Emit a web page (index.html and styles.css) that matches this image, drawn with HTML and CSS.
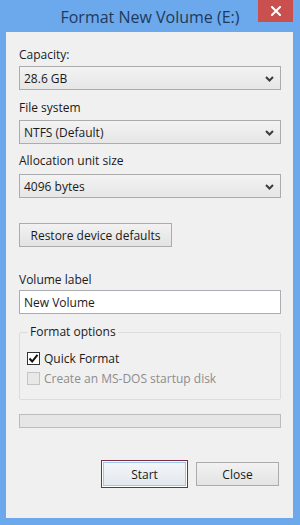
FILE: index.html
```html
<!DOCTYPE html>
<html>
<head>
<meta charset="utf-8">
<link rel="stylesheet" href="styles.css">
</head>
<body>
<div class="window">
  <div class="titlebar">
    <div class="title">Format New Volume (E:)</div>
    <div class="close-btn">
      <svg width="10" height="10" viewBox="0 0 10 10"><path d="M1 1L9 9M9 1L1 9" stroke="#fff" stroke-width="2" stroke-linecap="square"/></svg>
    </div>
  </div>
  <div class="client">
    <div class="label l1">Capacity:</div>
    <div class="combo c1"><span>28.6 GB</span><svg class="chev" width="9" height="6" viewBox="0 0 9 6"><path d="M1 1L4.5 4.5L8 1" fill="none" stroke="#3c3c3c" stroke-width="2"/></svg></div>
    <div class="label l2">File system</div>
    <div class="combo c2"><span>NTFS (Default)</span><svg class="chev" width="9" height="6" viewBox="0 0 9 6"><path d="M1 1L4.5 4.5L8 1" fill="none" stroke="#3c3c3c" stroke-width="2"/></svg></div>
    <div class="label l3">Allocation unit size</div>
    <div class="combo c3"><span>4096 bytes</span><svg class="chev" width="9" height="6" viewBox="0 0 9 6"><path d="M1 1L4.5 4.5L8 1" fill="none" stroke="#3c3c3c" stroke-width="2"/></svg></div>
    <div class="btn restore">Restore device defaults</div>
    <div class="label l4">Volume label</div>
    <div class="textbox">New Volume</div>
    <fieldset class="group">
      <legend>Format options</legend>
      <div class="check-row">
        <span class="box checked"><svg width="11" height="11" viewBox="0 0 11 11"><path d="M1.5 5.5L4.2 8.5L9.5 1.8" fill="none" stroke="#111" stroke-width="2"/></svg></span>
        <span>Quick Format</span>
      </div>
      <div class="check-row disabled">
        <span class="box"></span>
        <span>Create an MS-DOS startup disk</span>
      </div>
    </fieldset>
    <div class="progress"></div>
    <div class="actions">
      <div class="btn start"><div class="start-inner">Start</div></div>
      <div class="btn closeb">Close</div>
    </div>
  </div>
</div>
</body>
</html>
```
FILE: styles.css
```css
html, body {
  margin: 0;
  padding: 0;
}
body {
  width: 300px;
  height: 525px;
  overflow: hidden;
  font-family: "Open Sans", "Noto Sans", sans-serif;
  font-size: 12px;
  color: #1a1a1a;
}
.window {
  width: 300px;
  height: 525px;
  background: #6ca8ec;
  box-sizing: border-box;
  display: flex;
  flex-direction: column;
}
.titlebar {
  position: relative;
  height: 32px;
  display: flex;
  align-items: center;
  justify-content: center;
}
.title {
  font-size: 16px;
  color: #1f3a5a;
  margin-top: 1px;
}
.close-btn {
  position: absolute;
  right: 7px;
  top: 0;
  width: 35px;
  height: 22px;
  background: #c9504f;
  display: flex;
  align-items: center;
  justify-content: center;
}
.client {
  margin: 0 7px 0 6px;
  height: 486px;
  background: #f0f0f0;
  padding: 0 12px 0 13px;
  display: flex;
  flex-direction: column;
}
.label {
  height: 16px;
  line-height: 16px;
}
.l1 { margin-top: 15px; }
.l2 { margin-top: 10px; }
.l3 { margin-top: 9px; }
.l4 { margin-top: 25px; }
.combo {
  height: 24px;
  box-sizing: border-box;
  border: 1px solid #acacac;
  background: linear-gradient(#f3f3f3, #e6e6e6);
  display: flex;
  align-items: center;
  justify-content: space-between;
  padding: 0 6px 0 4px;
}
.c1 { margin-top: 3px; }
.c2 { margin-top: 4px; }
.c3 { margin-top: 5px; }
.chev { margin-top: 1px; }
.btn {
  box-sizing: border-box;
  border: 1px solid #acacac;
  background: linear-gradient(#f2f2f2, #e3e3e3);
  display: flex;
  align-items: center;
  justify-content: center;
}
.restore {
  margin-top: 25px;
  width: 153px;
  height: 24px;
}
.textbox {
  margin-top: 2px;
  height: 24px;
  box-sizing: border-box;
  border: 1px solid #abadb3;
  background: #fff;
  display: flex;
  align-items: center;
  padding-left: 4px;
}
.group {
  margin: 10px 0 0 0;
  padding: 8px 7px 0 7px;
  border: 1px solid #dcdcdc;
  border-radius: 2px;
  height: 76px;
  box-sizing: border-box;
}
.group legend {
  padding: 0 2px;
  margin-left: 1px;
  line-height: 16px;
}
.check-row {
  display: flex;
  align-items: center;
  height: 20px;
  gap: 4px;
}
.check-row.disabled {
  color: #8d8d8d;
}
.box {
  width: 13px;
  height: 13px;
  box-sizing: border-box;
  border: 1px solid #333;
  background: #fff;
  display: flex;
  align-items: center;
  justify-content: center;
}
.disabled .box {
  border-color: #c4c4c4;
  background: #e8e8e8;
}
.progress {
  margin-top: 14px;
  height: 14px;
  box-sizing: border-box;
  border: 1px solid #bcbcbc;
  background: #e6e6e6;
}
.actions {
  margin-top: 32px;
  display: flex;
  align-items: center;
  padding-left: 82px;
  gap: 8px;
}
.start {
  width: 87px;
  height: 28px;
  border: 1px solid #7d2a47;
  padding: 1px;
  background: #fff;
}
.start-inner {
  width: 100%;
  height: 100%;
  box-sizing: border-box;
  border: 1px solid #9cc8ea;
  background: linear-gradient(#f3f6f9, #e2e8ee);
  display: flex;
  align-items: center;
  justify-content: center;
}
.closeb {
  width: 83px;
  height: 24px;
}
```
